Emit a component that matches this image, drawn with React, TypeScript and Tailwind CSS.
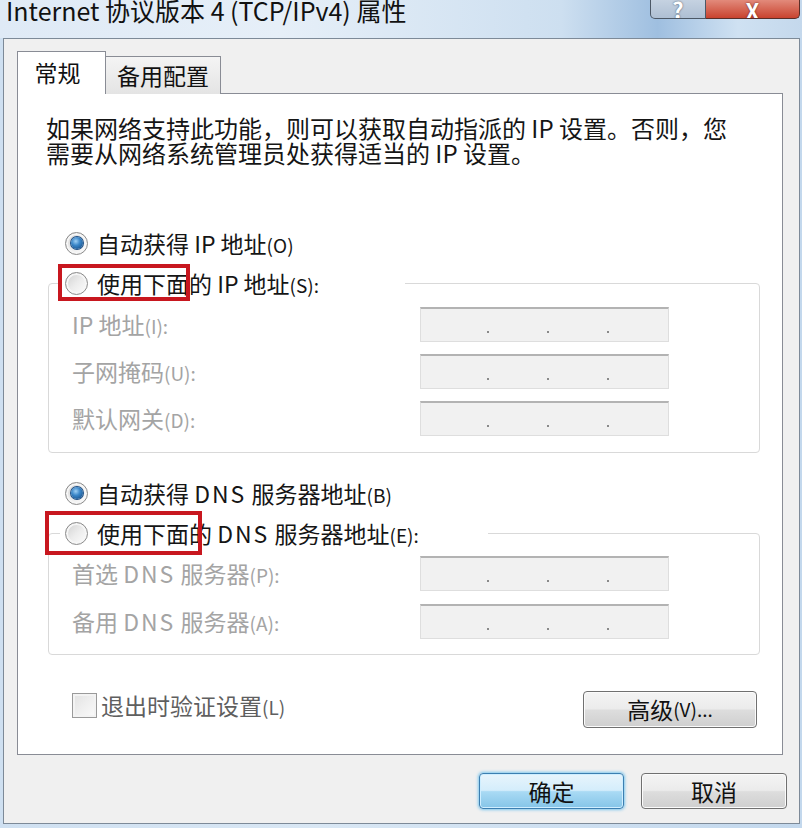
import type { ReactNode } from 'react'

const FONT = "font-['Noto_Sans_CJK_SC','Noto_Sans',sans-serif]"

function Radio({ checked }: { checked?: boolean }) {
  return (
    <span className="flex h-[23px] w-[23px] shrink-0 items-center justify-center rounded-full border border-[#8b8b8b] bg-gradient-to-br from-[#cfcfcf] via-[#ececec] to-[#fdfdfd] shadow-[inset_0_0_0_2px_#f6f6f6]">
      {checked && (
        <span className="h-[12px] w-[12px] rounded-full bg-[radial-gradient(circle_at_40%_35%,#9fd0f5_0%,#3a86c8_40%,#0c3f78_100%)] shadow-[0_0_0_1px_#1d4f86]" />
      )}
    </span>
  )
}

function Acc({ children }: { children: ReactNode }) {
  return <span className="text-[19px]">{children}</span>
}

// latin words are set a little wider in the original dialog font
function Dns() {
  return <span className="tracking-[2px]">DNS</span>
}

function RadioRow({ checked, children }: { checked?: boolean; children: ReactNode }) {
  return (
    <div className="ml-[42px] flex h-[40px] items-center gap-[9px] pl-[5px] text-[23px] text-[#151515]">
      <Radio checked={checked} />
      <span className="whitespace-nowrap">{children}</span>
    </div>
  )
}

// radio row that sits on the group box's top border, with the red annotation box over it
function LegendRow({ children, width, mark }: { children: ReactNode; width: string; mark: string }) {
  return (
    <div className={`relative z-10 ml-[42px] flex h-[40px] items-center gap-[9px] bg-white pl-[5px] text-[23px] text-[#151515] ${width}`}>
      <Radio />
      <span className="whitespace-nowrap">{children}</span>
      <span className={`pointer-events-none absolute border-[4px] border-[#c8171f] ${mark}`} />
    </div>
  )
}

function IpBox() {
  return (
    <div className="flex h-[35px] w-[249px] items-end gap-[58px] border border-[#dedede] border-t-[2px] border-t-[#b3b3b3] bg-[#f1f1f1] pb-[8px] pl-[66px]">
      <span className="h-[2px] w-[2px] bg-[#8a8a8a]" />
      <span className="h-[2px] w-[2px] bg-[#8a8a8a]" />
      <span className="h-[2px] w-[2px] bg-[#8a8a8a]" />
    </div>
  )
}

function Field({ label, acc }: { label: ReactNode; acc: string }) {
  return (
    <>
      <div className="flex h-[35px] items-center text-[23px] text-[#a4a4a4]">
        <span className="whitespace-nowrap">
          {label}
          <Acc>{acc}</Acc>
        </span>
      </div>
      <IpBox />
    </>
  )
}

function Button({ children, primary, className }: { children: ReactNode; primary?: boolean; className: string }) {
  return (
    <button
      className={`flex items-center justify-center rounded-[4px] border text-[23px] text-[#111] ${
        primary
          ? 'border-[#3c7fb1] bg-[linear-gradient(#e8f5fc_0%,#d4edfb_48%,#a9daf4_52%,#85c5e8_100%)] shadow-[0_0_3px_1px_#7ec7ee,inset_0_0_0_1px_#cfeeff]'
          : 'border-[#707070] bg-[linear-gradient(#f4f4f4_0%,#ebebeb_48%,#dddddd_52%,#cfcfcf_100%)] shadow-[inset_0_0_0_1px_#fbfbfb]'
      } ${className}`}
    >
      {children}
    </button>
  )
}

export default function App() {
  return (
    <div className={`h-[828px] w-[802px] overflow-hidden bg-[linear-gradient(90deg,#cfe0f1_0%,#d9e7f4_40%,#c3d8ed_100%)] ${FONT}`}>
      {/* Title bar */}
      <div className="flex h-[38px] items-start justify-between bg-[linear-gradient(90deg,#dfeaf6_0%,#e6eff8_35%,#cddff0_70%,#9fbfe0_82%,#cfe1f2_92%,#c4d8ec_100%)]">
        <div className="-mt-[5px] ml-[6px] whitespace-nowrap text-[25px] leading-[30px] text-[#111]">
          Internet 协议版本 4 (TCP/IPv4) 属性
        </div>
        <div className="mr-[2px] flex">
          <div className="flex h-[19px] w-[56px] items-end justify-center overflow-hidden rounded-bl-[5px] border border-t-0 border-[#4c5866] bg-[linear-gradient(#c5d2e1,#aebfd3)]">
            <span className="-mb-[2px] text-[22px] font-bold leading-[22px] text-white [text-shadow:0_0_2px_#3b4a5c]">?</span>
          </div>
          <div className="flex h-[19px] w-[94px] items-end justify-center overflow-hidden rounded-br-[5px] border border-l-0 border-t-0 border-[#5a2e28] bg-[linear-gradient(#e28a7b,#c9432f)]">
            <span className="-mb-[3px] text-[22px] font-bold leading-[22px] text-white [text-shadow:0_0_2px_#5a1a10]">X</span>
          </div>
        </div>
      </div>

      {/* Client area */}
      <div className="ml-[3px] h-[786px] w-[797px] border border-[#7d8a98] bg-[#f0f0f0] pt-[12px]">
        {/* Tabs */}
        <div className="relative z-10 -mb-px ml-[13px] flex items-end">
          <div className="flex h-[43px] w-[89px] items-center justify-center border border-b-0 border-[#898c95] bg-white pb-[2px] pr-[8px] text-[23px] text-[#111]">
            常规
          </div>
          <div className="flex h-[38px] w-[115px] items-center justify-center border border-b-0 border-l-0 border-[#898c95] bg-[linear-gradient(#f4f4f4,#e4e4e4)] text-[23px] text-[#111]">
            备用配置
          </div>
        </div>

        {/* Panel */}
        <div className="ml-[13px] h-[662px] w-[766px] border border-[#898c95] bg-white pt-[21px]">
          <p className="whitespace-nowrap pl-[28px] text-[24px] leading-[25px] text-[#151515]">
            如果网络支持此功能，则可以获取自动指派的 IP 设置。否则，您
            <br />
            需要从网络系统管理员处获得适当的 IP 设置。
          </p>

          <div className="mt-[58px]">
            <RadioRow checked>
              自动获得 IP 地址<Acc>(O)</Acc>
            </RadioRow>
            <LegendRow width="w-[345px]" mark="-left-[2px] top-[1px] h-[37px] w-[132px]">
              使用下面的 IP 地址<Acc>(S):</Acc>
            </LegendRow>
            <div className="-mt-[20px] ml-[30px] grid h-[170px] w-[712px] grid-cols-[348px_249px] content-start gap-y-[12px] rounded-[4px] border border-[#d9d9d9] pl-[23px] pt-[23px]">
              <Field label="IP 地址" acc="(I):" />
              <Field label="子网掩码" acc="(U):" />
              <Field label="默认网关" acc="(D):" />
            </div>

            <div className="mt-[20px]">
              <RadioRow checked>
                自动获得 <Dns /> 服务器地址<Acc>(B)</Acc>
              </RadioRow>
            </div>
            <LegendRow width="w-[428px]" mark="-left-[15px] -top-[2px] h-[44px] w-[157px]">
              使用下面的 <Dns /> 服务器地址<Acc>(E):</Acc>
            </LegendRow>
            <div className="-mt-[20px] ml-[30px] grid h-[122px] w-[712px] grid-cols-[348px_249px] content-start gap-y-[13px] rounded-[4px] border border-[#d9d9d9] pl-[23px] pt-[22px]">
              <Field label={<>首选 <Dns /> 服务器</>} acc="(P):" />
              <Field label={<>备用 <Dns /> 服务器</>} acc="(A):" />
            </div>
          </div>

          <div className="mr-[25px] mt-[33px] flex items-start justify-between">
            <label className="ml-[54px] flex items-center gap-[4px] text-[23px] text-[#5f5f5f]">
              <span className="h-[25px] w-[25px] border border-[#9a9a9a] bg-[linear-gradient(135deg,#e2e2e2,#fbfbfb)] shadow-[inset_0_0_0_2px_#f3f3f3]" />
              <span className="whitespace-nowrap">
                退出时验证设置<Acc>(L)</Acc>
              </span>
            </label>
            <Button className="mt-[3px] h-[37px] w-[174px]">
              高级<Acc>(V)...</Acc>
            </Button>
          </div>
        </div>

        {/* Footer */}
        <div className="mt-[18px] flex justify-end gap-[17px] pr-[12px]">
          <Button primary className="h-[36px] w-[145px]">
            确定
          </Button>
          <Button className="h-[36px] w-[146px]">取消</Button>
        </div>
      </div>
    </div>
  )
}
